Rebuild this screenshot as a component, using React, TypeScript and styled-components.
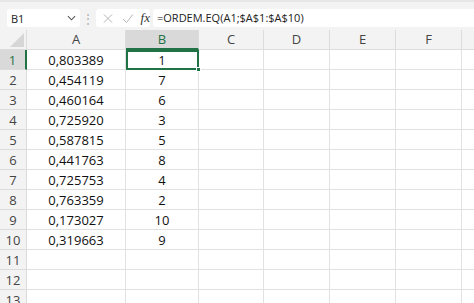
import styled, { createGlobalStyle } from "styled-components";

const cols = ["A", "B", "C", "D", "E", "F", ""];
const widths = [99, 73, 65, 66, 66, 66, 40];
const values = [
  ["0,803389", "1"],
  ["0,454119", "7"],
  ["0,460164", "6"],
  ["0,725920", "3"],
  ["0,587815", "5"],
  ["0,441763", "8"],
  ["0,725753", "4"],
  ["0,763359", "2"],
  ["0,173027", "10"],
  ["0,319663", "9"],
  ["", ""],
  ["", ""],
  ["", ""],
];

const App = () => {
  return (
    <Page>
      <GlobalStyle />
      <FormulaBar>
        <NameBox>
          <span>B1</span>
          <Chevron viewBox="0 0 10 6">
            <path d="M1 1l4 4 4-4" fill="none" stroke="#555" strokeWidth="1.2" />
          </Chevron>
        </NameBox>
        <Dots>⋮</Dots>
        <ActionBox>
          <svg width="11" height="11" viewBox="0 0 11 11">
            <path d="M1 1l9 9M10 1l-9 9" stroke="#b5b5b5" strokeWidth="1.1" />
          </svg>
          <svg width="13" height="11" viewBox="0 0 13 11">
            <path d="M1 6l4 4 7-9" fill="none" stroke="#b5b5b5" strokeWidth="1.1" />
          </svg>
          <Fx>fx</Fx>
        </ActionBox>
        <FormulaInput>=ORDEM.EQ(A1;$A$1:$A$10)</FormulaInput>
      </FormulaBar>
      <Sheet>
        <Corner>
          <svg width="14" height="14" viewBox="0 0 14 14">
            <path d="M14 0v14H0z" fill="#d6d6d6" />
          </svg>
        </Corner>
        {cols.map((c, i) => (
          <ColHeader key={i} $selected={c === "B"} style={{ width: widths[i] }}>
            {c}
          </ColHeader>
        ))}
        {values.map((row, r) => (
          <Row key={r}>
            <RowHeader $selected={r === 0}>{r + 1}</RowHeader>
            {cols.map((c, i) => (
              <Cell key={i} style={{ width: widths[i] }} $active={r === 0 && i === 1}>
                {row[i] ?? ""}
                {r === 0 && i === 1 && <Handle />}
              </Cell>
            ))}
          </Row>
        ))}
      </Sheet>
    </Page>
  );
};

const GlobalStyle = createGlobalStyle`
  body {
    margin: 0;
    background: #fff;
    font-family: "Open Sans", "Noto Sans", sans-serif;
  }
`;

const Page = styled.div`
  width: 474px;
  height: 303px;
  overflow: hidden;
`;

const FormulaBar = styled.div`
  display: flex;
  align-items: center;
  height: 30px;
  box-sizing: border-box;
  padding: 4px 0 0 7px;
  background: #f3f3f3;
  border-top: 2px solid #e6e6e6;
`;

const NameBox = styled.div`
  display: flex;
  align-items: center;
  justify-content: space-between;
  width: 73px;
  height: 18px;
  box-sizing: border-box;
  padding: 0 4px 0 4px;
  background: #fff;
  border-radius: 3px;
  font-size: 11px;
  color: #222;
`;

const Chevron = styled.svg`
  width: 9px;
  height: 6px;
`;

const Dots = styled.div`
  width: 16px;
  text-align: center;
  font-size: 12px;
  color: #b0b0b0;
`;

const ActionBox = styled.div`
  display: flex;
  align-items: center;
  gap: 9px;
  width: 54px;
  height: 18px;
  box-sizing: border-box;
  padding: 0 0 0 7px;
  background: #fff;
  border-radius: 3px;
`;

const Fx = styled.span`
  font-family: "Liberation Serif", serif;
  font-style: italic;
  font-size: 13px;
  color: #333;
  margin-left: -2px;
`;

const FormulaInput = styled.div`
  flex: 1;
  height: 18px;
  margin-left: 3px;
  box-sizing: border-box;
  padding-left: 4px;
  background: #fff;
  border-radius: 3px 0 0 3px;
  font-size: 11px;
  line-height: 18px;
  color: #222;
`;

const Sheet = styled.div`
  display: flex;
  flex-wrap: wrap;
  width: 502px;
`;

const Corner = styled.div`
  width: 27px;
  height: 20px;
  box-sizing: border-box;
  display: flex;
  align-items: flex-end;
  justify-content: flex-end;
  padding: 0 2px 2px 0;
  background: #f3f3f3;
  border-right: 1px solid #dcdcdc;
  border-bottom: 1px solid #dcdcdc;
`;

const ColHeader = styled.div<{ $selected?: boolean }>`
  height: 20px;
  box-sizing: border-box;
  text-align: center;
  font-size: 13px;
  line-height: 19px;
  color: ${(p) => (p.$selected ? "#217346" : "#444")};
  background: ${(p) => (p.$selected ? "#d9d9d9" : "#f3f3f3")};
  border-right: 1px solid #dcdcdc;
  border-bottom: ${(p) => (p.$selected ? "2px solid #217346" : "1px solid #dcdcdc")};
`;

const Row = styled.div`
  display: flex;
  width: 100%;
`;

const RowHeader = styled.div<{ $selected?: boolean }>`
  width: 27px;
  height: 20px;
  flex-shrink: 0;
  box-sizing: border-box;
  text-align: center;
  font-size: 13px;
  line-height: 20px;
  color: ${(p) => (p.$selected ? "#217346" : "#444")};
  background: ${(p) => (p.$selected ? "#d9d9d9" : "#f3f3f3")};
  border-right: ${(p) => (p.$selected ? "2px solid #217346" : "1px solid #dcdcdc")};
  border-bottom: 1px solid #dcdcdc;
`;

const Cell = styled.div<{ $active?: boolean }>`
  position: relative;
  flex-shrink: 0;
  height: 20px;
  box-sizing: border-box;
  text-align: center;
  font-size: 13px;
  line-height: 20px;
  color: #111;
  border-right: 1px solid #e1e1e1;
  border-bottom: 1px solid #e1e1e1;
  ${(p) => p.$active && "outline: 2px solid #217346; outline-offset: -2px; z-index: 1;"}
`;

const Handle = styled.span`
  position: absolute;
  right: -3px;
  bottom: -3px;
  width: 5px;
  height: 5px;
  background: #217346;
  border: 1px solid #fff;
  box-sizing: border-box;
`;

export default App;
